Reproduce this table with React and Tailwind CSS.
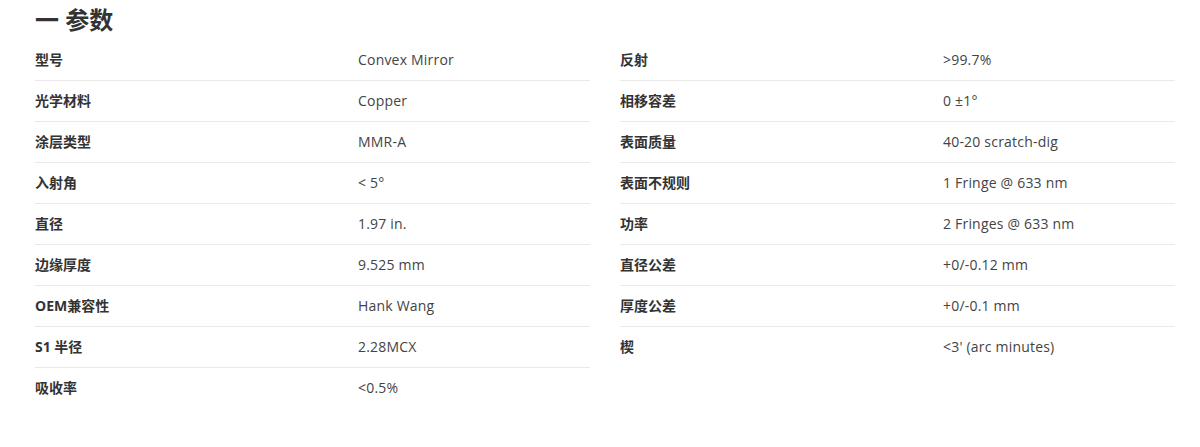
import React from 'react';

const left = [
  ['型号', 'Convex Mirror'],
  ['光学材料', 'Copper'],
  ['涂层类型', 'MMR-A'],
  ['入射角', '< 5°'],
  ['直径', '1.97 in.'],
  ['边缘厚度', '9.525 mm'],
  ['OEM兼容性', 'Hank Wang'],
  ['S1 半径', '2.28MCX'],
  ['吸收率', '<0.5%'],
];

const right = [
  ['反射', '>99.7%'],
  ['相移容差', '0 ±1°'],
  ['表面质量', '40-20 scratch-dig'],
  ['表面不规则', '1 Fringe @ 633 nm'],
  ['功率', '2 Fringes @ 633 nm'],
  ['直径公差', '+0/-0.12 mm'],
  ['厚度公差', '+0/-0.1 mm'],
  ['楔', "<3' (arc minutes)"],
];

function SpecColumn({ rows }) {
  return (
    <div className="w-[555px]">
      {rows.map(([label, value], i) => (
        <div
          key={label}
          className={`flex items-center h-[41px] pb-[2px] ${
            i < rows.length - 1 ? 'border-b border-[#e9e9e9]' : ''
          }`}
        >
          <span className="w-[323px] font-bold text-[#333]">{label}</span>
          <span className="text-[#444] tracking-[0.2px]">{value}</span>
        </div>
      ))}
    </div>
  );
}

export default function App() {
  return (
    <div
      className="bg-white h-[447px] pl-[35px] text-[14px]"
      style={{ fontFamily: '"Open Sans", "Noto Sans CJK SC", sans-serif' }}
    >
      <h2 className="h-[40px] flex items-center text-[24px] font-bold text-[#333] leading-none">
        一 参数
      </h2>
      <div className="flex gap-[30px]">
        <SpecColumn rows={left} />
        <SpecColumn rows={right} />
      </div>
    </div>
  );
}
